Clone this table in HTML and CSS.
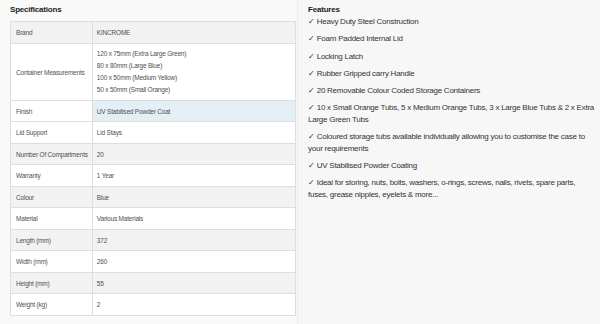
FILE: index.html
```html
<!DOCTYPE html>
<html>
<head>
    <meta charset="UTF-8">
    <title>Specifications</title>
    <link rel="stylesheet" href="styles.css">
</head>
<body>
<div id="page">
    <div id="specs">
        <div class="heading">Specifications</div>
        <table id="spec-table">
            <tr class="alt"><td class="label">Brand</td><td>KINCROME</td></tr>
            <tr><td class="label">Container Measurements</td><td class="multi">
                <p>120 x 75mm (Extra Large Green)</p>
                <p>80 x 80mm (Large Blue)</p>
                <p>100 x 50mm (Medium Yellow)</p>
                <p>50 x 50mm (Small Orange)</p>
            </td></tr>
            <tr class="hover"><td class="label">Finish</td><td>UV Stabilised Powder Coat</td></tr>
            <tr><td class="label">Lid Support</td><td>Lid Stays</td></tr>
            <tr class="alt"><td class="label">Number Of Compartments</td><td>20</td></tr>
            <tr><td class="label">Warranty</td><td>1 Year</td></tr>
            <tr class="alt"><td class="label">Colour</td><td>Blue</td></tr>
            <tr><td class="label">Material</td><td>Various Materials</td></tr>
            <tr class="alt"><td class="label">Length (mm)</td><td>372</td></tr>
            <tr><td class="label">Width (mm)</td><td>260</td></tr>
            <tr class="alt"><td class="label">Height (mm)</td><td>55</td></tr>
            <tr><td class="label">Weight (kg)</td><td>2</td></tr>
        </table>
    </div>
    <div id="features">
        <div class="heading">Features</div>
        <ul class="feature-list">
            <li>✓ Heavy Duty Steel Construction</li>
            <li>✓ Foam Padded Internal Lid</li>
            <li>✓ Locking Latch</li>
            <li>✓ Rubber Gripped carry Handle</li>
            <li>✓ 20 Removable Colour Coded Storage Containers</li>
            <li>✓ 10 x Small Orange Tubs, 5 x Medium Orange Tubs, 3 x Large Blue Tubs &amp; 2 x Extra Large Green Tubs</li>
            <li>✓ Coloured storage tubs available individually allowing you to customise the case to your requirements</li>
            <li>✓ UV Stabilised Powder Coating</li>
            <li>✓ Ideal for storing, nuts, bolts, washers, o-rings, screws, nails, rivets, spare parts, fuses, grease nipples, eyelets &amp; more...</li>
        </ul>
    </div>
</div>
</body>
</html>
```

FILE: styles.css
```css
body {
    margin: 0px;
    background-color: #f7f7f7;
    font-family: 'Liberation Sans', sans-serif;
    color: #444;
}
#page {
    display: flex;
    width: 600px;
    height: 324px;
}
#specs {
    width: 287px;
    padding: 4px 0px 0px 10px;
    border-right: 1px solid #ececec;
    background-color: #f9f9f9;
}
#features {
    flex: 1;
    padding: 4px 4px 0px 10px;
}
.heading {
    font-size: 8px;
    font-weight: bold;
    color: #222;
    height: 12px;
    line-height: 12px;
    letter-spacing: -0.2px;
}
#spec-table {
    width: 286px;
    margin-top: 5px;
    border-collapse: collapse;
    border: 1px solid #dedede;
    background-color: #fff;
    font-size: 6.5px;
    letter-spacing: -0.2px;
    color: #505050;
}
#spec-table td {
    height: 11.5px;
    padding: 5px 4px 4px 4px;
    border-bottom: 1px solid #dedede;
    vertical-align: middle;
    white-space: nowrap;
}
#spec-table td.label {
    width: 68px;
    border-right: 1px solid #dedede;
    padding-left: 5px;
}
#spec-table tr.alt td {
    background-color: #f2f2f2;
}
#spec-table tr.hover td {
    background-color: #e4eef5;
}
#spec-table tr.hover td.label {
    background-color: #fff;
}
#spec-table td.multi {
    padding-top: 4px;
    padding-bottom: 4px;
}
#spec-table td.multi p {
    margin: 0px;
    line-height: 12px;
}
.feature-list {
    list-style: none;
    margin: 0px;
    padding: 0px;
    font-size: 8px;
    line-height: 11.6px;
    letter-spacing: -0.25px;
    color: #333;
}
.feature-list li {
    margin-bottom: 5.7px;
}
```
